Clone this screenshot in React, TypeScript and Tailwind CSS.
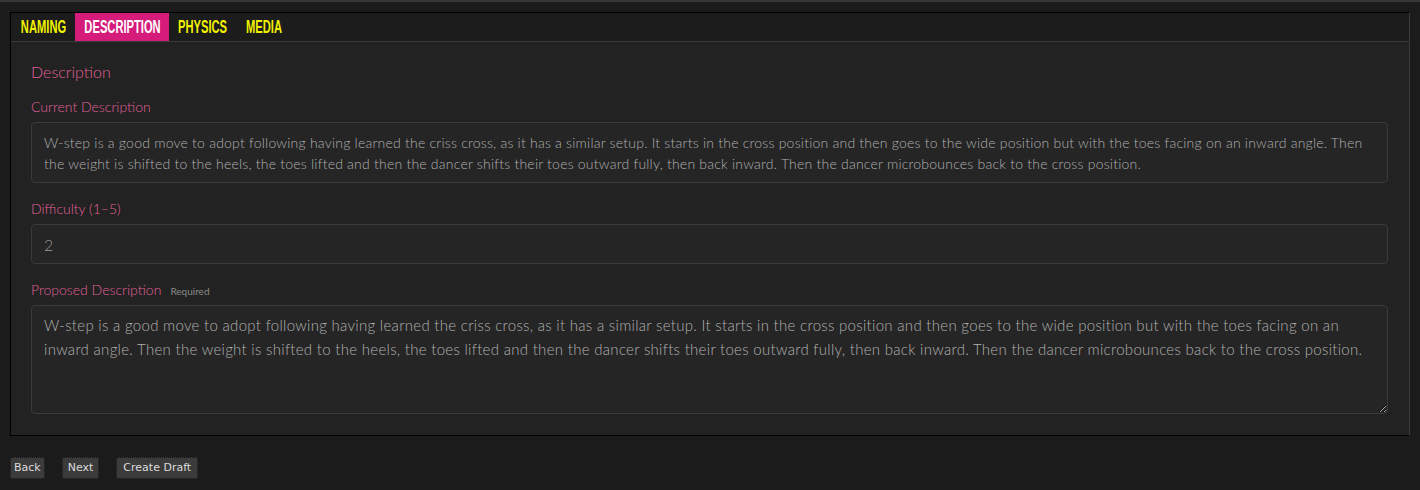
import { useState } from 'react';

const tabs = [
  { name: 'NAMING', w: 'w-[64px]' },
  { name: 'DESCRIPTION', w: 'w-[94px]' },
  { name: 'PHYSICS', w: 'w-[67px]' },
  { name: 'MEDIA', w: 'w-[55px]' },
];

const currentText =
  'W-step is a good move to adopt following having learned the criss cross, as it has a similar setup. It starts in the cross position and then goes to the wide position but with the toes facing on an inward angle. Then the weight is shifted to the heels, the toes lifted and then the dancer shifts their toes outward fully, then back inward. Then the dancer microbounces back to the cross position.';

export default function App() {
  const [active, setActive] = useState('DESCRIPTION');
  const [proposed, setProposed] = useState(currentText);
  const [difficulty, setDifficulty] = useState('2');

  return (
    <div className="min-h-screen bg-[#1b1b1b] border-t-2 border-[#363636] px-[10px] pt-[10px] font-['Lato',sans-serif]">
      {/* Panel */}
      <div className="border border-black border-r-[#3a3a3a] bg-[#222222]">
        {/* Tabs */}
        <div className="flex h-[29px] bg-[#1c1c1c] border-b border-[#3a3a3a]">
          {tabs.map((tab) => (
            <button
              key={tab.name}
              onClick={() => setActive(tab.name)}
              className={`${tab.w} h-[28px] flex items-center justify-center overflow-hidden ${
                active === tab.name ? 'bg-[#d51c7a] text-white' : 'text-[#f2f200]'
              }`}
            >
              <span className="inline-block scale-x-[0.62] font-['Liberation_Sans',sans-serif] font-bold text-[18px] leading-none whitespace-nowrap">
                {tab.name}
              </span>
            </button>
          ))}
        </div>

        {/* Content */}
        <div className="pl-[20px] pr-[21px] pt-[19px] pb-[21px]">
          <h2 className="text-[16px] font-light leading-[22px] text-[#e0609a]">Description</h2>

          <label className="block mt-[14px] text-[14px] font-light leading-[20px] text-[#e0609a]">
            Current Description
          </label>
          <div className="mt-[5px] rounded-[4px] border border-[#3a3a3a] bg-[#252525] pl-[12px] pr-[16px] pt-[9px] pb-[8px] text-[14px] font-light tracking-[0.22px] leading-[21px] text-[#b0b0b0]">
            {currentText}
          </div>

          <label className="block mt-[16px] text-[14px] font-light leading-[20px] text-[#e0609a]">
            Difficulty (1–5)
          </label>
          <input
            value={difficulty}
            onChange={(e) => setDifficulty(e.target.value)}
            className="mt-[5px] block w-full h-[40px] rounded-[4px] border border-[#3a3a3a] bg-[#252525] px-[12px] text-[16px] font-light text-[#9a9a9a] outline-none"
          />

          <div className="mt-[16px] flex items-baseline gap-[9px]">
            <label className="text-[14px] font-light leading-[20px] text-[#e0609a]">Proposed Description</label>
            <span className="text-[10px] text-[#8a8a8a]">Required</span>
          </div>
          <textarea
            value={proposed}
            onChange={(e) => setProposed(e.target.value)}
            className="mt-[5px] block w-full h-[109px] rounded-[4px] border border-[#3a3a3a] bg-[#252525] px-[12px] py-[7px] text-[15px] font-light tracking-[0.3px] leading-[24px] text-[#b0b0b0] outline-none"
          />
        </div>
      </div>

      {/* Actions */}
      <div className="mt-[21px] flex gap-[17px] font-['DejaVu_Sans',sans-serif] text-[11px]">
        <button className="h-[22px] px-[3px] bg-[#3b3b3b] border border-dotted border-[#111] rounded-[2px] text-[#dcdcdc]">Back</button>
        <button className="h-[22px] px-[5px] bg-[#3b3b3b] border border-dotted border-[#111] rounded-[2px] text-[#dcdcdc]">Next</button>
        <button className="h-[22px] px-[6px] bg-[#3b3b3b] border border-dotted border-[#111] rounded-[2px] text-[#dcdcdc]">Create Draft</button>
      </div>
    </div>
  );
}
